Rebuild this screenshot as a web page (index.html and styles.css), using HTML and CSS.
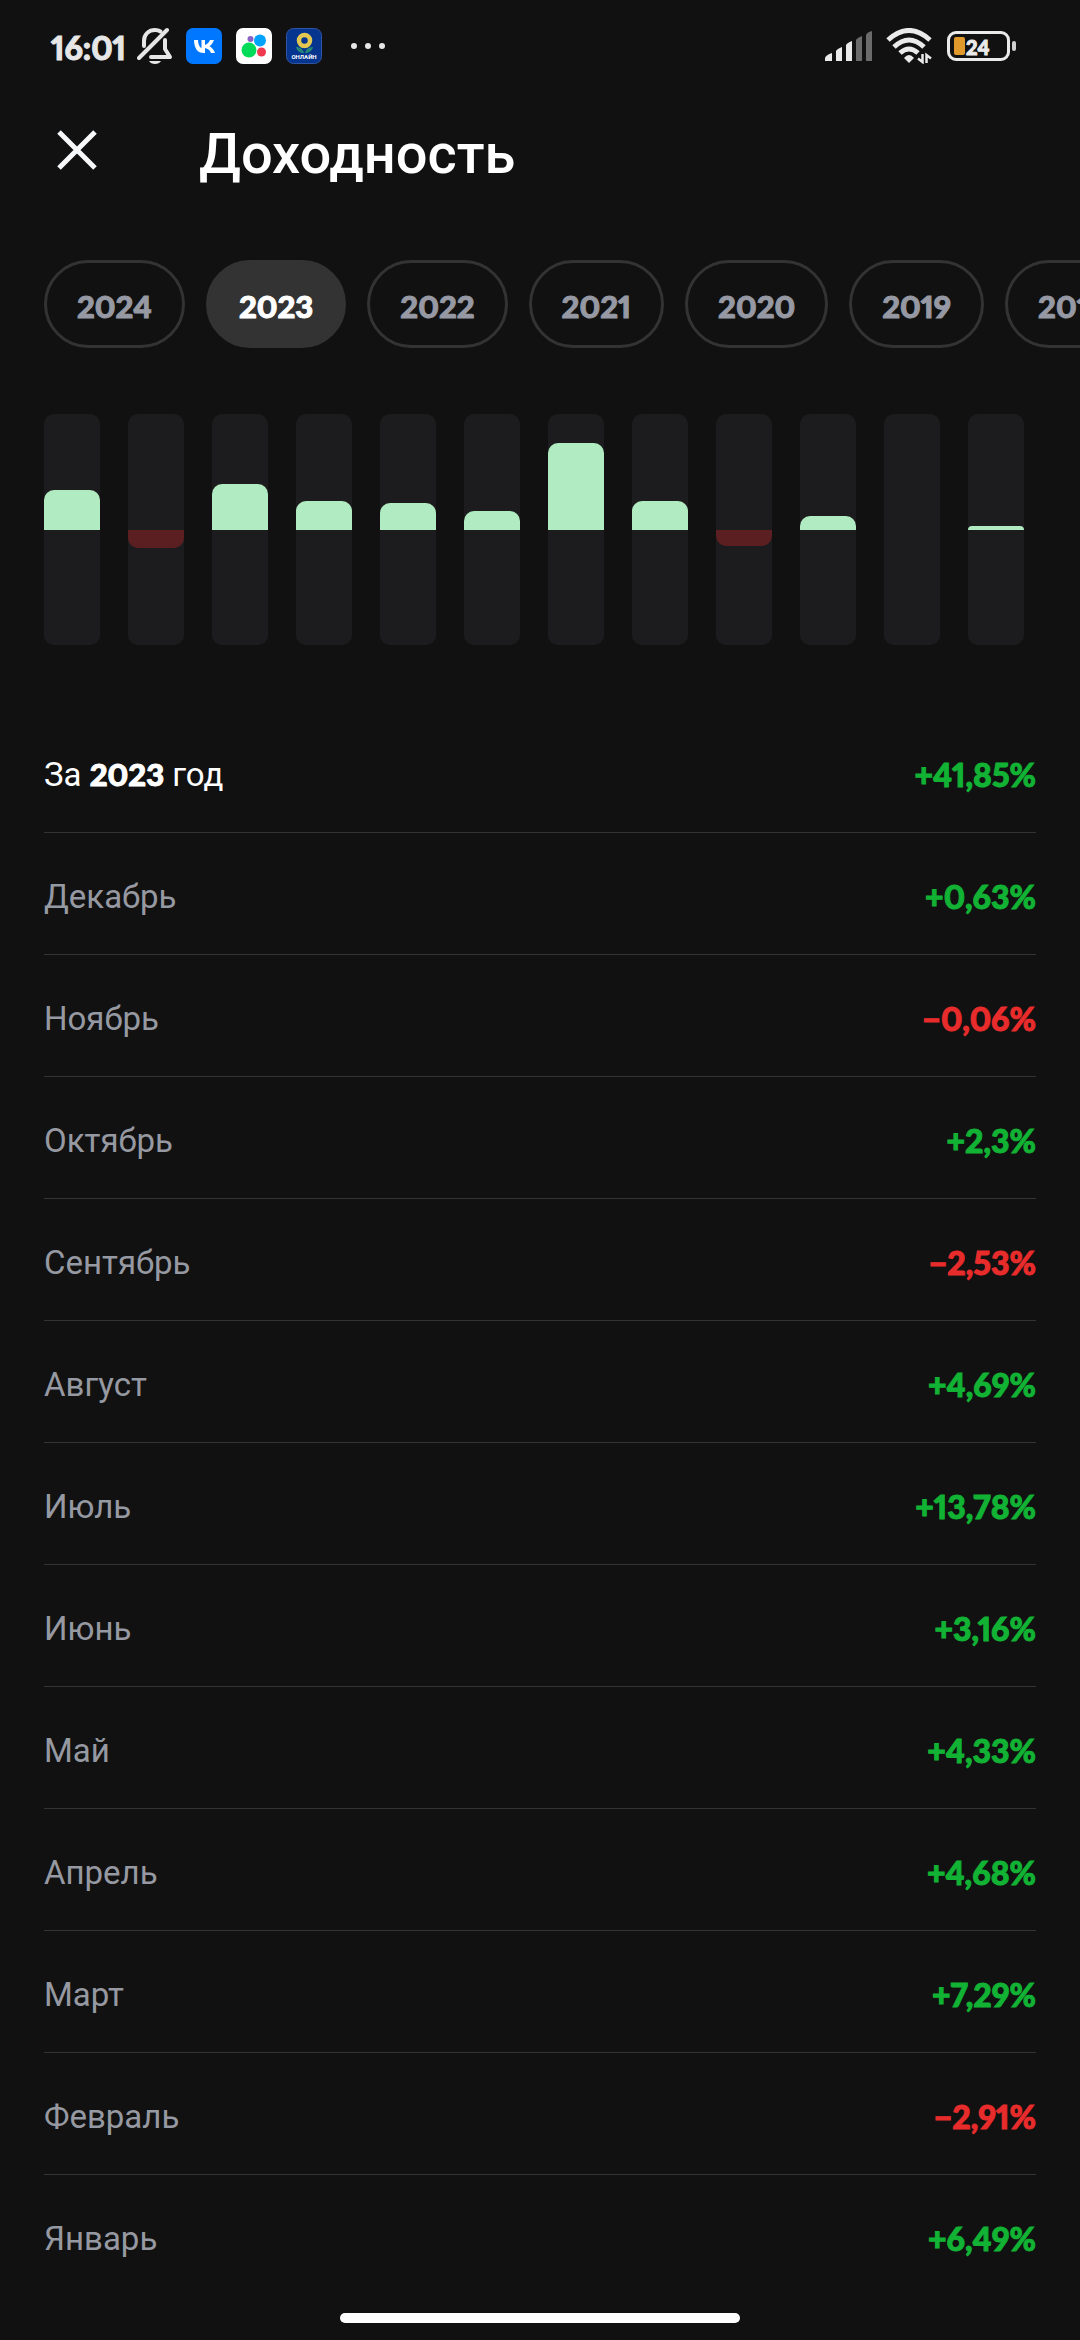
FILE: index.html
```html
<!DOCTYPE html>
<html lang="ru">
<head>
    <meta charset="UTF-8">
    <meta name="viewport" content="width=device-width, initial-scale=1.0">
    <title>Доходность</title>
    <link rel="stylesheet" href="styles.css">
</head>
<body>
    <!-- Status bar -->
    <div class="status">
        <span class="clock">16:01</span>
        <svg class="bell" width="36" height="38" viewBox="0 0 36 38" fill="none" stroke="#e6e6e6" stroke-width="4" stroke-linecap="round" stroke-linejoin="round">
            <path d="M7 19V14C7 7 12 3 18 3C20.500 3 22 3.500 23.500 4.500M28 13V22L33 30H14"/>
            <path d="M2 31L30 3"/>
            <path d="M12 34H24C22 38 14 38 12 34Z" fill="#e6e6e6" stroke="none"/>
        </svg>
        <div class="apps">
            <svg width="36" height="36" viewBox="0 0 36 36">
                <rect width="36" height="36" rx="7" fill="#0077ff"/>
                <path d="M8 12H12C12.200 17 14 19.500 15.500 20V12H19V17C21 16.500 23 14.500 24 12H28C27 15 25 17.300 23.500 18.300C25.500 19.300 27.800 21.500 29 25H25C24 22.500 22 20.500 19 20V25H18C11.500 25 8.200 20.500 8 12Z" fill="#fff"/>
            </svg>
            <svg width="36" height="36" viewBox="0 0 36 36">
                <rect width="36" height="36" rx="7" fill="#fff"/>
                <circle cx="14.500" cy="11" r="3" fill="#8b62c4"/>
                <circle cx="24" cy="12.500" r="6" fill="#00a2ff"/>
                <circle cx="13" cy="22" r="7.500" fill="#00dc5a"/>
                <circle cx="25.500" cy="24" r="4.500" fill="#f0384f"/>
            </svg>
            <svg width="36" height="36" viewBox="0 0 36 36">
                <rect x=".5" y=".5" width="35" height="35" rx="7" fill="#063590" stroke="#31559f"/>
                <circle cx="18.500" cy="12.500" r="5.500" fill="none" stroke="#e3c750" stroke-width="4.500"/>
                <path d="M10 19C14 19 17 21 18 25C14 25 11 23 10 19ZM27 19C23 19 20 21 19 25C23 25 26 23 27 19Z" fill="#238577"/>
                <text class="app-name" x="18" y="31" text-anchor="middle">ОНЛАЙН</text>
            </svg>
        </div>
        <svg class="more" width="36" height="8" viewBox="0 0 36 8" fill="#e6e6e6">
            <circle cx="4" cy="4" r="3"/>
            <circle cx="18" cy="4" r="3"/>
            <circle cx="32" cy="4" r="3"/>
        </svg>
        <svg class="signal" width="48" height="30" viewBox="0 0 48 30" fill="#eaeaea">
            <path d="M0 30V27Q1 24 7 22V30ZM11 30V20Q12 18 17 16V30ZM21 30V14Q22 12 27 10V30Z"/>
            <path d="M31 30V9Q32 7 37 5V30ZM41 30V4Q42 1 47 0V30Z" fill="#6b6b6b"/>
        </svg>
        <svg class="wifi" width="46" height="36" viewBox="0 0 46 36" fill="none" stroke="#eaeaea">
            <path d="M2 12Q23 -7 44 12M8 19Q23 5 38 19M14 25Q23 17 32 25" stroke-width="5"/>
            <path d="M18 30Q23 24 28 30L23 35Z" fill="#eaeaea" stroke="none"/>
            <path d="M36.500 26V34L32 30.500M40.500 35V27L45 30.500" stroke-width="2.500"/>
        </svg>
        <div class="battery">
            <span class="battery-fill"></span>
            <span class="battery-level">24</span>
        </div>
        <span class="battery-tip"></span>
    </div>

    <header class="header">
        <button type="button" class="close" aria-label="Закрыть">
            <svg width="40" height="40" viewBox="0 0 40 40" stroke="#f7f8fa" stroke-width="5">
                <path d="M2 2L38 38M38 2L2 38"/>
            </svg>
        </button>
        <h1>Доходность</h1>
    </header>

    <nav class="years">
        <button type="button" class="year">2024</button>
        <button type="button" class="year active">2023</button>
        <button type="button" class="year">2022</button>
        <button type="button" class="year">2021</button>
        <button type="button" class="year">2020</button>
        <button type="button" class="year">2019</button>
        <button type="button" class="year">2018</button>
    </nav>

    <!-- One bar per month, January to December -->
    <div class="chart">
        <div class="bar"><span class="up" style="height: 40px"></span></div>
        <div class="bar"><span class="down" style="height: 18px"></span></div>
        <div class="bar"><span class="up" style="height: 46px"></span></div>
        <div class="bar"><span class="up" style="height: 29px"></span></div>
        <div class="bar"><span class="up" style="height: 27px"></span></div>
        <div class="bar"><span class="up" style="height: 19px"></span></div>
        <div class="bar"><span class="up" style="height: 87px"></span></div>
        <div class="bar"><span class="up" style="height: 29px"></span></div>
        <div class="bar"><span class="down" style="height: 16px"></span></div>
        <div class="bar"><span class="up" style="height: 14px"></span></div>
        <div class="bar"></div>
        <div class="bar"><span class="up" style="height: 4px"></span></div>
    </div>

    <table class="months">
        <tr class="total"><th scope="row">За <b>2023</b> год</th><td class="plus">+41,85%</td></tr>
        <tr><th scope="row">Декабрь</th><td class="plus">+0,63%</td></tr>
        <tr><th scope="row">Ноябрь</th><td class="minus">−0,06%</td></tr>
        <tr><th scope="row">Октябрь</th><td class="plus">+2,3%</td></tr>
        <tr><th scope="row">Сентябрь</th><td class="minus">−2,53%</td></tr>
        <tr><th scope="row">Август</th><td class="plus">+4,69%</td></tr>
        <tr><th scope="row">Июль</th><td class="plus">+13,78%</td></tr>
        <tr><th scope="row">Июнь</th><td class="plus">+3,16%</td></tr>
        <tr><th scope="row">Май</th><td class="plus">+4,33%</td></tr>
        <tr><th scope="row">Апрель</th><td class="plus">+4,68%</td></tr>
        <tr><th scope="row">Март</th><td class="plus">+7,29%</td></tr>
        <tr><th scope="row">Февраль</th><td class="minus">−2,91%</td></tr>
        <tr><th scope="row">Январь</th><td class="plus">+6,49%</td></tr>
    </table>

    <div class="home-line"></div>
</body>
</html>
```
FILE: styles.css
```css
* {
    box-sizing: border-box;
}

body {
    margin: 0;
    background: #111111;
    color: #ffffff;
    font-family: Roboto, sans-serif;
    overflow-x: hidden;
}

button {
    padding: 0;
    border: none;
    background: none;
    color: inherit;
    cursor: pointer;
}

svg {
    display: block;
    flex: none;
}

/* Heavy rounded numerals */
.clock,
.battery-level,
.year,
.months td,
.months b {
    font-family: Lato, sans-serif;
    font-weight: 900;
    font-variant-numeric: proportional-nums;
    -webkit-text-stroke: 1px currentColor;
}

/* Status bar */
.status {
    display: flex;
    align-items: center;
    height: 92px;
    padding: 0 64px 0 51px;
}

.clock {
    width: 86px;
    padding-top: 4px;
    font-size: 32px;
    line-height: 40px;
    color: #e6e6e6;
}

.apps {
    display: flex;
    gap: 14px;
    margin-left: 13px;
}

.app-name {
    font-family: Roboto, sans-serif;
    font-weight: bold;
    font-size: 6px;
    fill: #ffffff;
}

.more {
    margin-left: 28px;
    margin-right: auto;
}

.wifi {
    margin-left: 13px;
}

.battery {
    display: flex;
    align-items: center;
    width: 63px;
    height: 30px;
    margin-left: 15px;
    padding-left: 4px;
    border: 3px solid #eaeaea;
    border-radius: 9px;
}

.battery-fill {
    width: 11px;
    height: 18px;
    border-radius: 2px;
    background: #e09a2c;
}

.battery-level {
    margin-left: 1px;
    padding-top: 3px;
    font-size: 20px;
    line-height: 21px;
    color: #eaeaea;
}

.battery-tip {
    width: 4px;
    height: 10px;
    margin-left: 2px;
    border-radius: 2px;
    background: #d0d0d0;
}

/* Header */
.header {
    display: flex;
    align-items: center;
    gap: 102px;
    height: 124px;
    padding: 0 57px;
}

.close {
    margin-bottom: 8px;
}

h1 {
    margin: 0;
    font-size: 56px;
    font-weight: 500;
    line-height: 64px;
}

/* Year chips */
.years {
    display: flex;
    gap: 21px;
    margin-top: 44px;
    padding-left: 44px;
    overflow: hidden;
}

.year {
    flex: none;
    height: 88px;
    padding: 4px 30px 0;
    border: 3px solid #333333;
    border-radius: 44px;
    font-size: 31px;
    color: #9699a3;
}

.year.active {
    background: #333333;
    color: #ffffff;
}

/* Chart */
.chart {
    display: grid;
    grid-template-columns: repeat(12, 1fr);
    gap: 28px;
    margin-top: 66px;
    padding: 0 56px 0 44px;
}

.bar {
    display: grid;
    grid-template-rows: 116px 115px;
    border-radius: 10px;
    background: #1c1c1e;
}

.up {
    grid-row: 1;
    align-self: end;
    border-radius: 10px 10px 0 0;
    background: #b1ebc1;
}

.down {
    grid-row: 2;
    border-radius: 0 0 10px 10px;
    background: #5c1f21;
}

/* Months table */
.months {
    width: calc(100% - 88px);
    margin: 66px 44px 0;
    border-spacing: 0;
}

.months th,
.months td {
    height: 122px;
    padding: 5px 0 0;
    border-bottom: 1px solid #333333;
}

.months tr:last-child th,
.months tr:last-child td {
    border-bottom-color: transparent;
}

.months th {
    text-align: left;
    font-size: 33px;
    font-weight: 400;
    color: #9699a1;
}

.months .total th {
    color: #ffffff;
}

.months td {
    text-align: right;
    font-size: 32px;
}

.months b {
    font-size: 31px;
}

.months .plus {
    color: #12b234;
}

.months .minus {
    color: #e82c2c;
}

.home-line {
    width: 37%;
    height: 10px;
    margin: 16px auto 17px;
    border-radius: 5px;
    background: #ffffff;
}
```
